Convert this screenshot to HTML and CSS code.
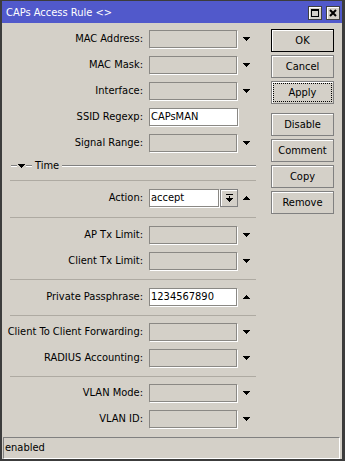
FILE: index.html
```html
<!DOCTYPE html>
<html>
<head>
<meta charset="utf-8">
<title>CAPs Access Rule</title>
<link rel="stylesheet" href="styles.css">
</head>
<body>
<div class="win">
  <div class="titlebar">
    <span class="title">CAPs Access Rule &lt;&gt;</span>
    <div class="tbtns">
      <span class="tbtn"><svg width="10" height="10" viewBox="0 0 10 10" shape-rendering="crispEdges"><path d="M1 1h8v8H1z M2 3v5h6V3z" fill="#000" fill-rule="evenodd"/></svg></span>
      <span class="tbtn"><svg width="10" height="10" viewBox="0 0 10 10"><path d="M2 2L8 8M8 2L2 8" stroke="#000" stroke-width="2"/></svg></span>
    </div>
  </div>
  <div class="main">
    <div class="form">
      <div class="sec s1">
        <div class="row"><span class="lbl">MAC Address:</span><span class="field"></span><svg class="arr" width="7" height="4" viewBox="0 0 7 4" shape-rendering="crispEdges"><path d="M0 0h7v1h-1v1h-1v1h-1v1h-1v-1h-1v-1h-1v-1h-1z"/></svg></div>
        <div class="row"><span class="lbl">MAC Mask:</span><span class="field"></span><svg class="arr" width="7" height="4" viewBox="0 0 7 4" shape-rendering="crispEdges"><path d="M0 0h7v1h-1v1h-1v1h-1v1h-1v-1h-1v-1h-1v-1h-1z"/></svg></div>
        <div class="row"><span class="lbl">Interface:</span><span class="field"></span><svg class="arr" width="7" height="4" viewBox="0 0 7 4" shape-rendering="crispEdges"><path d="M0 0h7v1h-1v1h-1v1h-1v1h-1v-1h-1v-1h-1v-1h-1z"/></svg></div>
        <div class="row"><span class="lbl">SSID Regexp:</span><span class="field on wide">CAPsMAN</span></div>
        <div class="row"><span class="lbl">Signal Range:</span><span class="field"></span><svg class="arr" width="7" height="4" viewBox="0 0 7 4" shape-rendering="crispEdges"><path d="M0 0h7v1h-1v1h-1v1h-1v1h-1v-1h-1v-1h-1v-1h-1z"/></svg></div>
      </div>
      <div class="ghead">
        <span class="gl short"></span>
        <svg class="garr" width="7" height="4" viewBox="0 0 7 4" shape-rendering="crispEdges"><path d="M0 0h7v1h-1v1h-1v1h-1v1h-1v-1h-1v-1h-1v-1h-1z"/></svg>
        <span class="gl short"></span>
        <span class="gtext">Time</span>
        <span class="gl long"></span>
      </div>
      <div class="sep first"></div>
      <div class="sec s2">
        <div class="row"><span class="lbl">Action:</span><span class="field on narrow">accept</span><span class="dbtn"><svg width="7" height="8" viewBox="0 0 7 8" shape-rendering="crispEdges"><path d="M0 0h7v1H0z M3 2h1v2H3z M0 4h7v1h-1v1h-1v1h-1v1h-1v-1h-1v-1h-1v-1h-1z"/></svg></span><svg class="arr" width="7" height="4" viewBox="0 0 7 4" shape-rendering="crispEdges"><path d="M3 0h1v1h1v1h1v1h1v1H0V3h1V2h1V1h1z"/></svg></div>
      </div>
      <div class="sep"></div>
      <div class="sec s3">
        <div class="row"><span class="lbl">AP Tx Limit:</span><span class="field"></span><svg class="arr" width="7" height="4" viewBox="0 0 7 4" shape-rendering="crispEdges"><path d="M0 0h7v1h-1v1h-1v1h-1v1h-1v-1h-1v-1h-1v-1h-1z"/></svg></div>
        <div class="row"><span class="lbl">Client Tx Limit:</span><span class="field"></span><svg class="arr" width="7" height="4" viewBox="0 0 7 4" shape-rendering="crispEdges"><path d="M0 0h7v1h-1v1h-1v1h-1v1h-1v-1h-1v-1h-1v-1h-1z"/></svg></div>
      </div>
      <div class="sep"></div>
      <div class="sec s4">
        <div class="row"><span class="lbl">Private Passphrase:</span><span class="field on">1234567890</span><svg class="arr" width="7" height="4" viewBox="0 0 7 4" shape-rendering="crispEdges"><path d="M3 0h1v1h1v1h1v1h1v1H0V3h1V2h1V1h1z"/></svg></div>
      </div>
      <div class="sep"></div>
      <div class="sec s5">
        <div class="row"><span class="lbl">Client To Client Forwarding:</span><span class="field"></span><svg class="arr" width="7" height="4" viewBox="0 0 7 4" shape-rendering="crispEdges"><path d="M0 0h7v1h-1v1h-1v1h-1v1h-1v-1h-1v-1h-1v-1h-1z"/></svg></div>
        <div class="row"><span class="lbl">RADIUS Accounting:</span><span class="field"></span><svg class="arr" width="7" height="4" viewBox="0 0 7 4" shape-rendering="crispEdges"><path d="M0 0h7v1h-1v1h-1v1h-1v1h-1v-1h-1v-1h-1v-1h-1z"/></svg></div>
      </div>
      <div class="sep"></div>
      <div class="sec s6">
        <div class="row"><span class="lbl">VLAN Mode:</span><span class="field"></span><svg class="arr" width="7" height="4" viewBox="0 0 7 4" shape-rendering="crispEdges"><path d="M0 0h7v1h-1v1h-1v1h-1v1h-1v-1h-1v-1h-1v-1h-1z"/></svg></div>
        <div class="row"><span class="lbl">VLAN ID:</span><span class="field"></span><svg class="arr" width="7" height="4" viewBox="0 0 7 4" shape-rendering="crispEdges"><path d="M0 0h7v1h-1v1h-1v1h-1v1h-1v-1h-1v-1h-1v-1h-1z"/></svg></div>
      </div>
    </div>
    <div class="buttons">
      <span class="btn default">OK</span>
      <span class="btn">Cancel</span>
      <span class="btn focus">Apply</span>
      <span class="btn spaced">Disable</span>
      <span class="btn">Comment</span>
      <span class="btn">Copy</span>
      <span class="btn">Remove</span>
    </div>
  </div>
  <div class="status"><span>enabled</span></div>
</div>
</body>
</html>
```

FILE: styles.css
```css
* { box-sizing: border-box; }
html, body { margin: 0; padding: 0; }
body {
  width: 345px;
  height: 461px;
  overflow: hidden;
  background: #3c3c3c;
  font-family: "DejaVu Sans Condensed", "DejaVu Sans", sans-serif;
  font-stretch: condensed;
  font-size: 11px;
  color: #000;
}
.win {
  margin: 1px 3px 2px 2px;
  height: 458px;
  background: #d4d0c8;
  display: flex;
  flex-direction: column;
}
.titlebar {
  height: 22px;
  background: #5159cb;
  display: flex;
  align-items: center;
  padding: 0 2px 0 4px;
  color: #fff;
}
.title { flex: 1; line-height: 22px; padding-top: 1px; }
.tbtns { display: flex; gap: 4px; margin-top: 2px; }
.tbtn {
  width: 14px;
  height: 14px;
  border: 1px solid #404040;
  background: #d4d0c8;
  box-shadow: inset 1px 1px #fff;
  display: flex;
  align-items: center;
  justify-content: center;
}
.main { display: flex; flex: 1; }
.form { width: 262px; padding-top: 7px; }
.row { display: flex; align-items: flex-start; height: 19px; }
.row + .row { margin-top: 7px; }
.lbl { width: 141px; text-align: right; line-height: 18px; white-space: nowrap; }
.field {
  margin-left: 6px;
  width: 88px;
  height: 18px;
  border: 1px solid #8a8884;
  box-shadow: 1px 1px 0 #fff;
  padding-left: 1px;
  line-height: 16px;
  white-space: nowrap;
}
.field.on { background: #fff; }
.field.narrow { width: 70px; }
.field.wide { width: 89px; }
.arr { margin-left: 6px; margin-top: 7px; }
.dbtn {
  margin-left: 1px;
  width: 18px;
  height: 18px;
  border: 1px solid #808080;
  box-shadow: inset 1px 1px #fff;
  display: flex;
  align-items: center;
  justify-content: center;
}
.dbtn + .arr { margin-left: 5px; }
.ghead { display: flex; align-items: center; height: 14px; margin-top: 6px; padding: 0 8px 0 9px; }
.gl { height: 2px; border-top: 1px solid #808080; border-bottom: 1px solid #fff; }
.gl.short { width: 6px; }
.gl.long { flex: 1; }
.garr { margin: 0 1px; }
.gtext { margin: 0 3px; line-height: 14px; }
.sep { height: 1px; background: #aeaaa2; margin: 0 8px; }
.sep.first { margin-top: 7px; }
.s2 { padding: 8px 0 9px; }
.s3 { padding: 8px 0 8px; }
.s4 { padding: 8px 0 8px; }
.s5 { padding: 7px 0 8px; }
.s6 { padding: 7px 0 0; }
.buttons {
  width: 63px;
  margin-left: 7px;
  padding-top: 6px;
  display: flex;
  flex-direction: column;
  gap: 3px;
}
.btn {
  position: relative;
  height: 23px;
  border: 1px solid #808080;
  box-shadow: inset 1px 1px #fff;
  display: flex;
  align-items: center;
  justify-content: center;
}
.btn.default { border-color: #000; }
.btn.focus::after {
  content: "";
  position: absolute;
  inset: 1px;
  border: 1px dotted #000;
}
.btn.spaced { margin-top: 6px; }
.status {
  margin: auto 2px 0 1px;
  height: 22px;
  border-top: 1px solid #808080;
  border-left: 1px solid #808080;
  border-right: 1px solid #fff;
  border-bottom: 1px solid #fff;
  padding-left: 1px;
  line-height: 20px;
}
```
